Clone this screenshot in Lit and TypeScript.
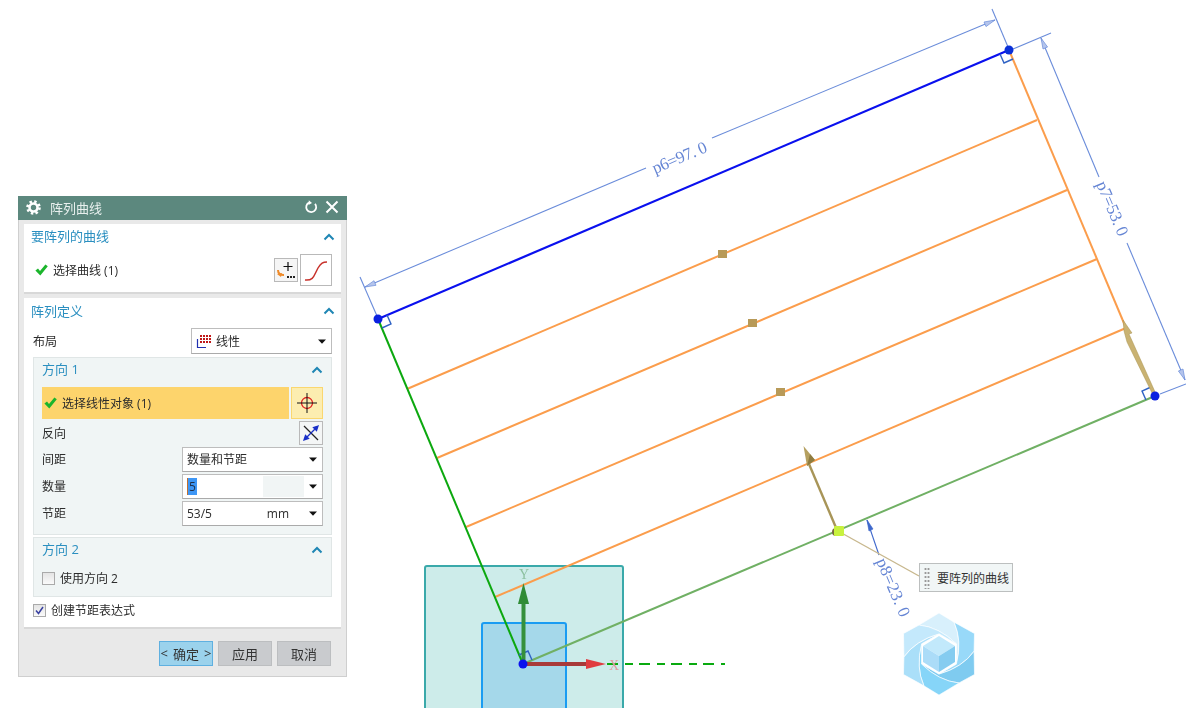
import { LitElement, html, css, svg } from "lit";
import { customElement } from "lit/decorators.js";

const chevron = html`<svg class="chev" width="12" height="8" viewBox="0 0 12 8"><path d="M1.5 6.5 6 2l4.5 4.5" fill="none" stroke="#1f86b4" stroke-width="2"/></svg>`;
const check = html`<svg class="check" width="13" height="12" viewBox="0 0 13 12"><path d="M.4 6.6 3 4.6 5 7 10.4.4 12.8 2.2 5.3 11.6z" fill="#1bb52c"/></svg>`;
const caret = html`<svg class="caret" width="8" height="5" viewBox="0 0 8 5"><path d="M0 .5h8L4 4.8z" fill="#111"/></svg>`;

@customElement("app-root")
export class AppRoot extends LitElement {
  static styles = css`
    :host { display: block; width: 1186px; height: 708px; position: relative; overflow: hidden; background: #fff;
      font-family: "Open Sans", "Noto Sans CJK SC", sans-serif; font-size: 12px; color: #2c2c2c; }
    .canvas { position: absolute; left: 0; top: 0; filter: blur(0.35px); }
    .dim { font-family: "Liberation Serif", serif; fill: #6585d4; }
    .tip { position: absolute; left: 919px; top: 563px; width: 94px; height: 29px; box-sizing: border-box; display: flex; align-items: center;
      gap: 7px; padding-left: 4px; background: #f1f6f6; border: 1px solid #bcbfbf; color: #333; font-size: 12px; white-space: nowrap; font-family: "Noto Sans CJK SC", sans-serif; }
    .grip { width: 6px; height: 22px; background-image: radial-gradient(circle, #999 1px, transparent 1.2px); background-size: 3px 4px; flex: none; }

    .dialog { position: absolute; left: 18px; top: 196px; width: 329px; height: 481px; box-sizing: border-box; background: #e9e9e9; border: 1px solid #cfcfcf; border-top: none; display: flex; flex-direction: column; filter: blur(0.25px); }
    .head { height: 24px; margin: 0 -1px; background: #5c887e; color: #e8f0ee; display: flex; align-items: center; font-size: 13px; padding: 0 8px 2px 8px; box-sizing: border-box; gap: 9px; flex: none; }
    .head .grow { flex: 1; }
    .head .rst { margin-right: -2px; }
    .panel { background: #fff; margin: 0 5px; border-bottom: 2px solid #d8d8d8; }
    .p1 { margin-top: 4px; height: 70px; box-sizing: border-box; }
    .p2 { margin-top: 4px; height: 331px; box-sizing: border-box; padding: 0 9px; }
    .title { display: flex; justify-content: space-between; align-items: center; color: #2a8fc0; font-size: 13px; }
    .p1 .title { height: 26px; padding: 0 6px 0 7px; box-sizing: border-box; }
    .p1 .title span { position: relative; top: -2px; }
    .p2 .title.top { height: 26px; margin: 0 -3px 0 -2px; }
    .title span { position: relative; top: -1px; }
    .row1 { display: flex; align-items: center; height: 34px; margin-top: 3px; padding: 0 9px 0 11px; }
    .row1 .lab { margin-left: 5px; flex: 1; }
    .btn { box-sizing: border-box; border: 1px solid #b9b9b9; background: #f5f5f5; display: flex; align-items: center; justify-content: center; flex: none; }
    .b24 { width: 24px; height: 24px; }
    .b32 { width: 32px; height: 32px; background: #fff; margin-left: 2px; }
    .field { display: flex; align-items: center; justify-content: space-between; }
    .lb { position: relative; top: -1px; }
    .layout { height: 26px; margin-top: 4px; }
    .select { box-sizing: border-box; height: 26px; width: 141px; background: #fff; border: 1px solid #bdbdbd; border-bottom-color: #aaa; display: flex; align-items: center; padding: 0 5px 1px 4px; position: relative; }
    .select .val { flex: 1; }
    .layout .select { gap: 4px; padding-bottom: 0; }
    .group { background: #f0f5f5; border: 1px solid #e0e6e6; box-sizing: border-box; padding: 0 8px; }
    .g1 { height: 178px; margin-top: 3px; }
    .g2 { height: 60px; margin-top: 2px; }
    .group .title { height: 23px; }
    .pick { display: flex; height: 32px; margin-top: 6px; gap: 2px; }
    .bar { flex: 1; background: #fdd46c; display: flex; align-items: center; gap: 5px; padding: 0 0 1px 2px; color: #2c2c2c; }
    .bcross { width: 32px; height: 32px; background: #fcedb0; border-color: #fad76f; }
    .rev { height: 24px; margin-top: 2px; }
    .rev .b24 { background: #f4f6f6; }
    .frow { height: 25px; margin-top: 2px; }
    .frow .select { height: 25px; }
    .sel5 { background: #3d96f5; color: #20304a; padding: 0 1px; border-left: 1px solid #c07030; }
    .shade { position: absolute; right: 18px; top: 1px; bottom: 1px; width: 41px; background: #f1f5f5; }
    .unit { margin-right: 20px; }
    .ck { display: flex; align-items: center; gap: 5px; }
    .box { width: 13px; height: 13px; box-sizing: border-box; border: 1px solid #aaa; background: linear-gradient(#e4e4e4, #fafafa); display: flex; align-items: center; justify-content: center; }
    .g2 .ck { margin-top: 8px; }
    .expr { margin-top: 4px; }
    .foot { display: flex; justify-content: flex-end; gap: 5px; padding: 12px 15px 0 0; }
    .act { box-sizing: border-box; width: 54px; height: 25px; background: #c9cbce; border: 1px solid #bcbec0; display: flex; align-items: center; justify-content: center; font-size: 13px; color: #333; padding-bottom: 1px; }
    .ok { background: #9bd2ec; border-color: #5fb0e0; gap: 5px; }
  `;

  private logo() {
    const fills = ["#d8f0fc", "#98d9f9", "#7fcbf0", "#86d5f8", "#aadff9", "#c4e9fc"];
    return svg`<g transform="translate(939 654)">
      ${fills.map((f, i) => svg`<path transform="rotate(${i * 60})" fill="${f}" stroke="#fff" stroke-width=".6" d="M-20-29 0-41 15.100-31.800Q23.400-13.500 17.400 10.200L17.500-10Q0-27-20-29Z"/>`)}
      <path d="M0-18 16-8 0 2-16-8Z" fill="#c2e9fb"/><path d="M-16-8 0 2V18L-16 8Z" fill="#abdcf8"/><path d="M16-8 0 2V18L16 8Z" fill="#85ccf0"/>
    </g>`;
  }

  private canvas() {
    return html`<svg class="canvas" width="1186" height="708" viewBox="0 0 1186 708">
      <rect x="425" y="566" width="198" height="160" rx="2" fill="#cdecea" stroke="#3aa9aa" stroke-width="2"/>
      <rect x="482" y="623" width="84" height="100" rx="2" fill="#a5d8ea" stroke="#1a9cf2" stroke-width="2"/>

      <g stroke="#fb9d4c" stroke-width="2" fill="none">
        <path d="M1009 50 1126 328"/><path d="M1037 120 407 389"/><path d="M1067 190 437 458"/><path d="M1097 259 466 527"/><path d="M1126 328 495 597"/>
      </g>
      <path d="M378 319 1009 50" stroke="#0a10ee" stroke-width="2.2"/>
      <path d="M378 319 523 664" stroke="#0ca80f" stroke-width="2"/>
      <path d="M523 664 1155 396" stroke="#70b064" stroke-width="2"/>
      <path d="M607 664H725" stroke="#0aaa10" stroke-width="2" stroke-dasharray="11 7 8 6"/>

      <g fill="#b89a58"><rect x="718" y="250" width="9" height="8"/><rect x="748" y="319" width="9" height="8"/><rect x="776" y="388" width="9" height="8"/></g>

      <g fill="none" stroke="#2f62c4" stroke-width="1.4">
        <path d="M387 315 391 324 382 328"/><path d="M1000 54 1004 63 1013 59"/><path d="M1146 400 1142 391 1151 387"/><path d="M532 660 528 651 519 655"/>
      </g>

      <!-- dimensions -->
      <g stroke="#6a8cda" stroke-width="1.1" fill="none">
        <path d="M360 277 377 316"/><path d="M365 287 646 168"/><path d="M712 138 995 20"/>
        <path d="M992 9 1008 47"/><path d="M1013 49 1051 33"/>
        <path d="M1041 38 1099 177"/><path d="M1127 243 1185 380"/><path d="M1160 394 1186 384"/>
        <path d="M867 520 879 555" stroke="#3f68cc"/>
      </g>
      <g fill="#b4c4ec" stroke="#6a8cda" stroke-width=".7">
        <path d="M365 287 376 285.300 374 280.700Z"/>
        <path d="M995 20 986 26.600 984 22Z"/>
        <path d="M1041 38 1047.600 47 1043 49Z"/>
        <path d="M1185 380 1183 369 1178.400 371Z"/>
        <path d="M867 520 873 529 869 531Z" fill="#3f68cc" stroke="#3f68cc"/>
      </g>
      <text class="dim" transform="translate(655 174) rotate(-23)" font-size="17" textLength="58">p6=97. 0</text>
      <text class="dim" transform="translate(1096 184) rotate(67)" font-size="17" textLength="58">p7=53. 0</text>
      <text class="dim" transform="translate(876 561) rotate(67)" font-size="17" textLength="62">p8=23. 0</text>

      <path d="M838 531 919 576" stroke="#c8b88e" stroke-width="1.4"/>

      <!-- handles -->
      <path d="M1123 320 1132 333 1129 334 1156 394 1153 395 1127 342 1124 331Z" fill="#c9b272" stroke="#a8924e" stroke-width=".5"/>
      <path d="M837 530 809 464" stroke="#a89558" stroke-width="2.4"/>
      <path d="M803.500 446 815 460 807 466Z" fill="#b5a060"/>
      <path d="M810 454 815 460 807 466Z" fill="#8f7c40"/>
      <circle cx="836" cy="532" r="4" fill="#7a6a40"/>
      <rect x="834" y="526" width="10" height="10" rx="1" fill="#c8f23e"/>

      <!-- triad -->
      <path d="M523.500 664V600" stroke="#35903c" stroke-width="4"/>
      <path d="M523.500 583 529 604 518 604Z" fill="#2f8c36"/>
      <text x="524" y="579" font-size="14" font-family="Liberation Serif" text-anchor="middle" fill="#8cc0a0">Y</text>
      <path d="M523 664H590" stroke="#a83a3a" stroke-width="4"/>
      <path d="M606 664 586 659 586 669Z" fill="#e03c40"/>
      <text x="614" y="670" font-size="14" font-family="Liberation Serif" text-anchor="middle" fill="#e09aa0">X</text>

      <circle cx="378" cy="319" r="4.500" fill="#0a20e0"/>
      <circle cx="1009" cy="50" r="4.500" fill="#0a30d8"/>
      <circle cx="1155" cy="396" r="4.500" fill="#0a20e0"/>
      <circle cx="523" cy="664" r="4.500" fill="#0a10ee"/>
      ${this.logo()}
    </svg>`;
  }

  render() {
    return html`
      ${this.canvas()}
      <div class="tip"><span class="grip"></span><span>要阵列的曲线</span></div>
      <div class="dialog">
        <div class="head">
          <svg width="15" height="15" viewBox="0 0 15 15"><circle cx="7.500" cy="7.500" r="4" fill="none" stroke="#fff" stroke-width="2.600"/><circle cx="7.500" cy="7.500" r="6" fill="none" stroke="#fff" stroke-width="2.600" stroke-dasharray="2.400 2.310"/></svg>
          <span>阵列曲线</span><span class="grow"></span>
          <svg class="rst" width="14" height="14" viewBox="0 0 14 14"><path d="M5 2.600A5 5 0 1 0 11 3.800" fill="none" stroke="#fff" stroke-width="1.800"/><path d="M4.800 .2 8 3 4.500 5z" fill="#fff"/></svg>
          <svg width="14" height="14" viewBox="0 0 14 14"><path d="M1.500 1.500 12.500 12.500M12.500 1.500 1.500 12.500" stroke="#fff" stroke-width="2"/></svg>
        </div>
        <div class="panel p1">
          <div class="title"><span>要阵列的曲线</span>${chevron}</div>
          <div class="row1">${check}<span class="lab">选择曲线 (1)</span>
            <div class="btn b24"><svg width="22" height="22" viewBox="0 0 22 22"><path d="M13 3v9M8.500 7.500h9" stroke="#111" stroke-width="1.200"/><path d="M3 11q0 5 6 5" fill="none" stroke="#ee8a2a" stroke-width="2"/><path d="M2 15l4 3 1-4z" fill="#ee8a2a"/><path d="M12 17h2v2h-2zM15 17h2v2h-2zM18 17h2v2h-2z" fill="#222"/></svg></div>
            <div class="btn b32"><svg width="28" height="24" viewBox="0 0 28 24"><path d="M3 22c9 1 9-5 13-12 3-5 5-6 9-6" fill="none" stroke="#c8322c" stroke-width="1.500"/></svg></div>
          </div>
        </div>
        <div class="panel p2">
          <div class="title top"><span>阵列定义</span>${chevron}</div>
          <div class="field layout"><span>布局</span>
            <div class="select"><svg width="16" height="15" viewBox="0 0 16 15"><g fill="#c01818"><path d="M4 1h2v2H4zM7 1h2v2H7zM10 1h2v2h-2zM13 1h2v2h-2zM4 4h2v2H4zM7 4h2v2H7zM10 4h2v2h-2zM13 4h2v2h-2zM4 7h2v2H4zM7 7h2v2H7zM10 7h2v2h-2zM13 7h2v2h-2z"/></g><path d="M1.500 5v8.500H10" fill="none" stroke="#2030b0" stroke-width="1.200"/></svg><span class="val">线性</span>${caret}</div>
          </div>
          <div class="group g1">
            <div class="title"><span>方向 1</span>${chevron}</div>
            <div class="pick">
              <div class="bar">${check}<span>选择线性对象 (1)</span></div>
              <div class="btn bcross"><svg width="22" height="22" viewBox="0 0 22 22"><circle cx="11" cy="11" r="5.500" fill="none" stroke="#e02020" stroke-width="1.300"/><path d="M1 11h20M11 1v20" stroke="#111" stroke-width="1"/></svg></div>
            </div>
            <div class="field rev"><span>反向</span>
              <div class="btn b24"><svg width="20" height="20" viewBox="0 0 20 20"><path d="M3 3 17 17" stroke="#222" stroke-width="1.300"/><path d="M17 3 12.500 4.500 15.500 7.500ZM3 17 4.500 12.500 7.500 15.500ZM14 6 6 14" fill="#1a30c8" stroke="#1a30c8" stroke-width="1.300"/></svg></div>
            </div>
            <div class="field frow"><span class="lb">间距</span><div class="select"><span class="val">数量和节距</span>${caret}</div></div>
            <div class="field frow"><span class="lb">数量</span><div class="select"><span class="val"><span class="sel5">5</span></span><span class="shade"></span>${caret}</div></div>
            <div class="field frow"><span class="lb">节距</span><div class="select"><span class="val">53/5</span><span class="unit">mm</span>${caret}</div></div>
          </div>
          <div class="group g2">
            <div class="title"><span>方向 2</span>${chevron}</div>
            <div class="ck"><span class="box"></span><span>使用方向 2</span></div>
          </div>
          <div class="ck expr"><span class="box"><svg width="11" height="11" viewBox="0 0 11 11"><path d="M2 5.500 4.500 8.500 9 2" fill="none" stroke="#3840a0" stroke-width="1.500"/></svg></span><span>创建节距表达式</span></div>
        </div>
        <div class="foot">
          <div class="act ok"><span>&lt;</span><span>确定</span><span>&gt;</span></div>
          <div class="act">应用</div>
          <div class="act">取消</div>
        </div>
      </div>
    `;
  }
}
